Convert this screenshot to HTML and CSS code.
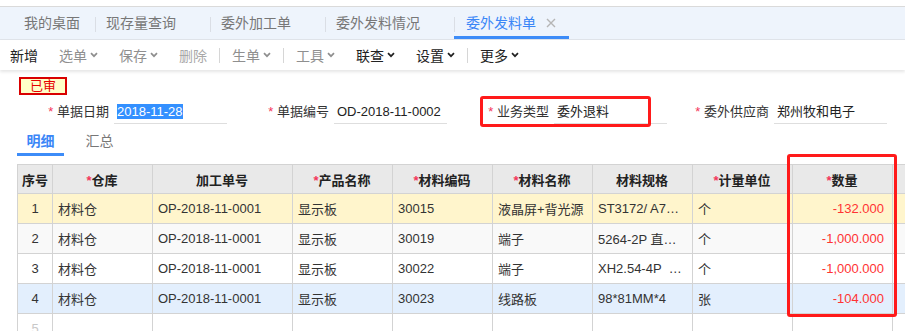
FILE: index.html
```html
<!DOCTYPE html>
<html>
  <head>
    <meta charset="utf-8" />
    <title>委外发料单</title>
    <link rel="stylesheet" href="styles.css">
  </head>

  <body>
    <div class="tabbar">
      <div class="tab">我的桌面</div>
      <div class="tab">现存量查询</div>
      <div class="tab">委外加工单</div>
      <div class="tab">委外发料情况</div>
      <div class="tab active">
        委外发料单
        <svg class="close" width="10" height="10" viewBox="0 0 10 10"><path d="M1 1L9 9M9 1L1 9" stroke="#b5b5b5" stroke-width="1.4" fill="none" /></svg>
      </div>
    </div>

    <div class="toolbar">
      <span class="tool">新增</span>
      <span class="tool off">选单<svg class="caret" width="8" height="6" viewBox="0 0 8 6"><path d="M1 1.2L4 4.2L7 1.2" /></svg></span>
      <span class="tool off">保存<svg class="caret" width="8" height="6" viewBox="0 0 8 6"><path d="M1 1.2L4 4.2L7 1.2" /></svg></span>
      <span class="tool off light">删除</span>
      <span class="sep"></span>
      <span class="tool off">生单<svg class="caret" width="8" height="6" viewBox="0 0 8 6"><path d="M1 1.2L4 4.2L7 1.2" /></svg></span>
      <span class="sep"></span>
      <span class="tool off">工具<svg class="caret" width="8" height="6" viewBox="0 0 8 6"><path d="M1 1.2L4 4.2L7 1.2" /></svg></span>
      <span class="tool">联查<svg class="caret" width="8" height="6" viewBox="0 0 8 6"><path d="M1 1.2L4 4.2L7 1.2" /></svg></span>
      <span class="tool">设置<svg class="caret" width="8" height="6" viewBox="0 0 8 6"><path d="M1 1.2L4 4.2L7 1.2" /></svg></span>
      <span class="sep"></span>
      <span class="tool">更多<svg class="caret" width="8" height="6" viewBox="0 0 8 6"><path d="M1 1.2L4 4.2L7 1.2" /></svg></span>
    </div>

    <div class="sheet">
      <div class="badge">已审</div>

      <div class="fields">
        <div class="field">
          <label><i class="star">*</i> 单据日期</label>
          <div class="value"><span class="sel">2018-11-28</span></div>
        </div>
        <div class="field">
          <label><i class="star">*</i> 单据编号</label>
          <div class="value">OD-2018-11-0002</div>
        </div>
        <div class="field">
          <label><i class="star">*</i> 业务类型</label>
          <div class="value">委外退料</div>
          <div class="mark mark-type"></div>
        </div>
        <div class="field">
          <label><i class="star">*</i> 委外供应商</label>
          <div class="value">郑州牧和电子</div>
        </div>
      </div>

      <div class="subtabs">
        <div class="subtab on">明细</div>
        <div class="subtab">汇总</div>
      </div>

      <div class="grid-wrap">
        <table class="grid">
          <colgroup>
            <col style="width: 35px" />
            <col style="width: 100px" />
            <col style="width: 140px" />
            <col style="width: 100px" />
            <col style="width: 100px" />
            <col style="width: 100px" />
            <col style="width: 100px" />
            <col style="width: 100px" />
            <col style="width: 100px" />
            <col style="width: 200px" />
          </colgroup>
          <tr>
            <th class="no">序号</th>
            <th><i class="star">*</i>仓库</th>
            <th>加工单号</th>
            <th><i class="star">*</i>产品名称</th>
            <th><i class="star">*</i>材料编码</th>
            <th><i class="star">*</i>材料名称</th>
            <th>材料规格</th>
            <th><i class="star">*</i>计量单位</th>
            <th><i class="star">*</i>数量</th>
            <th></th>
          </tr>
          <tr class="row-current">
            <td class="no">1</td>
            <td>材料仓</td>
            <td>OP-2018-11-0001</td>
            <td>显示板</td>
            <td>30015</td>
            <td>液晶屏+背光源</td>
            <td title="ST3172/ A7130-PCB">ST3172/ A7…</td>
            <td>个</td>
            <td class="num">-132.000</td>
            <td></td>
          </tr>
          <tr class="row-alt">
            <td class="no">2</td>
            <td>材料仓</td>
            <td>OP-2018-11-0001</td>
            <td>显示板</td>
            <td>30019</td>
            <td>端子</td>
            <td title="5264-2P 直针">5264-2P 直…</td>
            <td>个</td>
            <td class="num">-1,000.000</td>
            <td></td>
          </tr>
          <tr>
            <td class="no">3</td>
            <td>材料仓</td>
            <td>OP-2018-11-0001</td>
            <td>显示板</td>
            <td>30022</td>
            <td>端子</td>
            <td title="XH2.54-4P 弯针">XH2.54-4P&nbsp; …</td>
            <td>个</td>
            <td class="num">-1,000.000</td>
            <td></td>
          </tr>
          <tr class="row-hover">
            <td class="no">4</td>
            <td>材料仓</td>
            <td>OP-2018-11-0001</td>
            <td>显示板</td>
            <td>30023</td>
            <td>线路板</td>
            <td>98*81MM*4</td>
            <td>张</td>
            <td class="num">-104.000</td>
            <td></td>
          </tr>
          <tr>
            <td class="no empty">5</td>
            <td></td>
            <td></td>
            <td></td>
            <td></td>
            <td></td>
            <td></td>
            <td></td>
            <td></td>
            <td></td>
          </tr>
        </table>
        <div class="mark mark-qty"></div>
      </div>
    </div>
  </body>
</html>
```

FILE: styles.css
```css
html,
body {
  margin: 0;
  overflow: hidden;
}
body {
  font-family: "Liberation Sans", "Noto Sans CJK SC", sans-serif;
  background-color: #ffffff;
  color: #333;
}

/* page tabs */
.tabbar {
  display: flex;
  margin-top: 6px;
  height: 32px;
  padding-left: 13px;
  border-top: 1px solid #dadada;
  border-bottom: 1px solid #e0e4ea;
  background-color: #eef4fc;
}
.tab {
  position: relative;
  padding: 0 34px 0 11px;
  line-height: 32px;
  font-size: 14px;
  color: #777;
  white-space: nowrap;
}
.tab:first-child {
  padding: 0 15px 0 11px;
}
.tab + .tab::before {
  content: "";
  position: absolute;
  left: 0;
  top: 10px;
  height: 15px;
  border-left: 1px solid #dadee5;
}
.tab.active {
  display: flex;
  align-items: center;
  padding: 0 13px 0 12px;
  color: #3a86f7;
}
.tab.active::after {
  content: "";
  position: absolute;
  left: 0;
  right: 0;
  bottom: 0;
  height: 3px;
  background-color: #3d8cf8;
}
.close {
  margin-left: 10px;
}

/* toolbar */
.toolbar {
  position: relative;
  display: flex;
  align-items: center;
  height: 30px;
  padding-left: 10px;
  font-size: 14px;
  box-shadow: 0 2px 3px rgba(0, 0, 0, 0.1);
}
.tool {
  display: flex;
  align-items: center;
  margin-right: 21px;
  color: #222;
  cursor: pointer;
}
.tool.off {
  color: #8f8f8f;
}
.tool.light {
  color: #a8a8a8;
}
.caret {
  margin-left: 3px;
}
.caret path {
  fill: none;
  stroke: currentColor;
  stroke-width: 1.7;
}
.sep {
  width: 1px;
  height: 15px;
  margin: 0 12px 0 -9px;
  background-color: #d6d6d6;
}

/* header form */
.sheet {
  padding-top: 7px;
}
.badge {
  width: 48px;
  height: 18px;
  margin-left: 19px;
  box-sizing: border-box;
  border: 2px solid #d90000;
  background-color: #ffffc8;
  color: #e60000;
  font-size: 13px;
  line-height: 14px;
  text-align: center;
}
.fields {
  display: flex;
  margin-top: 5px;
  padding-left: 20px;
}
.field {
  position: relative;
  display: flex;
  width: 220px;
  font-size: 13px;
}
.field label {
  width: 89px;
  padding-right: 5px;
  text-align: right;
  line-height: 24px;
  color: #333;
  white-space: nowrap;
}
.star {
  font-style: normal;
  color: #f4365a;
}
.value {
  width: 113px;
  box-sizing: border-box;
  padding-left: 3px;
  border-bottom: 1px solid #dedede;
  line-height: 23px;
  color: #222;
  white-space: nowrap;
}
.sel {
  background-color: #3390ff;
  color: #fff;
}
.mark {
  position: absolute;
  box-sizing: border-box;
  border: 3px solid #ff1a1a;
  border-radius: 3px;
}
.mark-type {
  left: 20px;
  top: -4px;
  width: 171px;
  height: 31px;
}

/* detail tabs */
.subtabs {
  display: flex;
  margin: 6px 0 0 17px;
}
.subtab {
  width: 47px;
  margin-right: 12px;
  border-bottom: 3px solid transparent;
  line-height: 23px;
  text-align: center;
  font-size: 14px;
  color: #777;
}
.subtab.on {
  color: #3a86f7;
  font-weight: bold;
  border-bottom-color: #3d8cf8;
}

/* detail grid */
.grid-wrap {
  position: relative;
  margin: 8px 0 0 17px;
}
.grid {
  border-collapse: collapse;
  table-layout: fixed;
  width: 1075px;
  font-size: 13px;
}
.grid th,
.grid td {
  padding: 0 6px 0 5px;
  border: 1px solid #d3d3d3;
  white-space: nowrap;
  overflow: hidden;
}
.grid th {
  height: 28px;
  background-color: #e9e9e9;
  color: #222;
  font-weight: bold;
  text-align: center;
}
.grid td {
  height: 29px;
  color: #333;
}
.grid .no {
  text-align: center;
  padding: 0;
}
.grid td.empty {
  color: #c8c8c8;
}
.grid td.num {
  padding-right: 8px;
  text-align: right;
  color: #f33;
}
.row-current td {
  background-color: #fff5cc;
}
.row-alt td {
  background-color: #f9f9f9;
}
.row-hover td {
  background-color: #e3effd;
}
.mark-qty {
  left: 770px;
  top: -10px;
  width: 110px;
  height: 163px;
}
```
